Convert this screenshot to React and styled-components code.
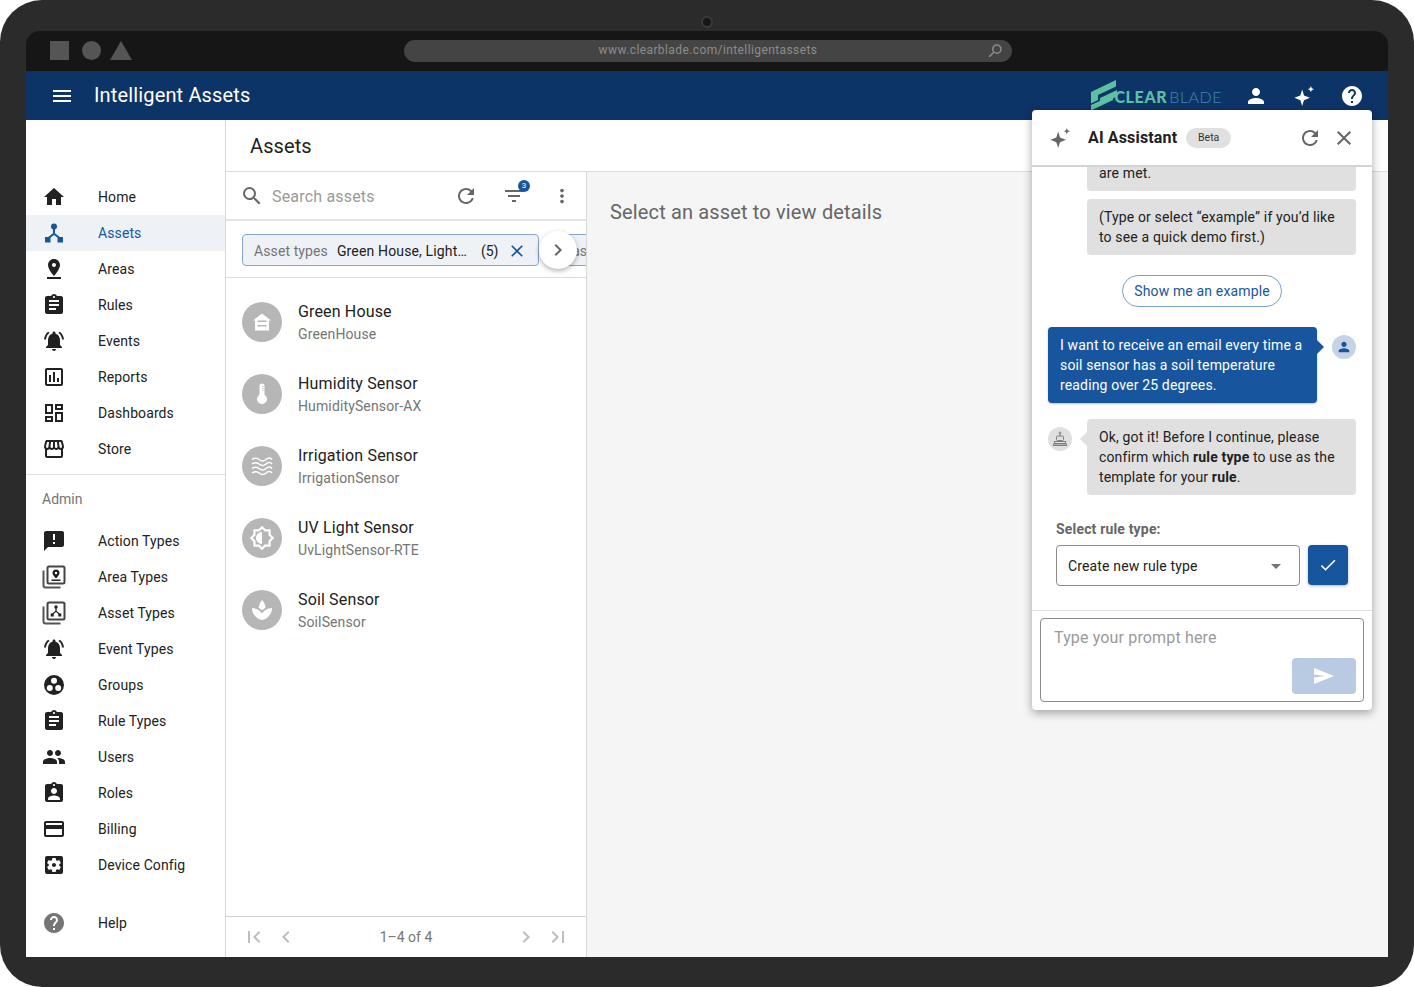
import React from "react";
import styled, { createGlobalStyle } from "styled-components";
import {
  MdMenu, MdPerson, MdHelp, MdRefresh, MdClose, MdHome, MdPinDrop, MdAssignment, MdNotificationsActive,
  MdOutlineInsertChart, MdOutlineDashboard, MdOutlineStorefront, MdAnnouncement, MdPeople,
  MdAssignmentInd, MdOutlineCreditCard, MdSettingsApplications, MdSearch, MdFilterList, MdMoreVert,
  MdChevronRight, MdChevronLeft, MdFirstPage, MdLastPage, MdArrowDropDown, MdCheck, MdOutlineBrightness6, MdSpa,
} from "react-icons/md";

const Global = createGlobalStyle`
  html, body { margin: 0; padding: 0; background: #fff; }
  body { font-family: Roboto, "Liberation Sans", sans-serif; color: #212121; }
  * { box-sizing: border-box; }
`;

const Frame = styled.div`
  width: 1414px; height: 987px; background: #2b2b2b; border-radius: 42px;
  padding: 0 26px 30px; display: flex; flex-direction: column; overflow: hidden;
`;
const Bezel = styled.div`height: 31px; flex: none; display: flex; align-items: center; justify-content: center; padding-top: 13px;`;
const Camera = styled.span`width: 12px; height: 12px; border-radius: 50%; background: #161616; border: 2px solid #3a3a3a;`;
const Screen = styled.div`flex: 1; min-height: 0; display: flex; flex-direction: column; position: relative;`;
const BrowserBar = styled.div`
  height: 40px; flex: none; background: #161616; border-radius: 14px 14px 0 0;
  display: flex; align-items: center; padding: 0 24px; position: relative;
`;
const Shapes = styled.svg`width: 84px; height: 20px; flex: none;`;
const UrlBar = styled.div`
  margin-left: 270px; width: 608px; height: 22px; border-radius: 11px; background: #444;
  display: flex; align-items: center; justify-content: center; position: relative;
  font-size: 12px; letter-spacing: 0.4px; color: #8c8c8c; padding-bottom: 2px;
`;
const UrlIcon = styled(MdSearch)`position: absolute; right: 8px; top: 2px; color: #8c8c8c; transform: scaleX(-1);`;
const AppBar = styled.header`
  height: 49px; flex: none; background: #0d3466; color: #fff; display: flex; align-items: center; padding: 0 24px 0 24px;
`;
const AppTitle = styled.div`font-size: 20px; margin-left: 20px; letter-spacing: 0.15px; flex: 1; padding-bottom: 1px;`;
const LogoWrap = styled.div`display: flex; align-items: flex-end; margin-right: 22px; height: 49px; padding-bottom: 13px; position: relative;`;
const LogoMark = styled.svg`width: 28px; height: 32px; position: absolute; left: -24px; top: 8px;`;
const LogoClear = styled.span`font-family: Lato, sans-serif; font-weight: 900; font-size: 16px; line-height: 20px; letter-spacing: 0.65px; color: #5cc0a2;`;
const LogoBlade = styled.span`font-family: Lato, sans-serif; font-weight: 300; font-size: 16px; line-height: 20px; letter-spacing: 0.5px; color: #3f86b8; margin-left: 2px;`;
const TopIcons = styled.div`display: flex; align-items: center; gap: 24px;`;
const IconSlot = styled.span`width: 24px; height: 24px; display: inline-flex; align-items: center; justify-content: center; flex: none; color: ${p => p.$c || "inherit"}; margin-left: ${p => p.$ml || 0}px;`;

const Body = styled.div`flex: 1; min-height: 0; display: flex; background: #fff;`;
const Sidebar = styled.nav`width: 200px; flex: none; border-right: 1px solid #d8d8d8; display: flex; flex-direction: column; padding-top: 51px;`;
const NavGroup = styled.div`padding: ${p => p.$top || 0}px 0 ${p => p.$bottom || 0}px; border-top: 1px solid ${p => p.$line ? "#e0e0e0" : "transparent"};`;
const NavRow = styled.div`
  height: 36px; display: flex; align-items: center; padding-left: 16px; font-size: 14px; letter-spacing: 0.1px;
  background: ${p => p.$active ? "#eef1f5" : "transparent"}; color: ${p => p.$active ? "#17569f" : "#212121"};
`;
const NavLabel = styled.span`margin-left: 32px;`;
const AdminTitle = styled.div`font-size: 14px; color: #757575; padding: 16px 0 0 16px; height: 48px; line-height: 16px;`;
const Spacer = styled.div`height: 22px;`;

const Main = styled.div`flex: 1; min-width: 0; display: flex; flex-direction: column;`;
const PageHead = styled.div`height: 52px; flex: none; border-bottom: 1px solid #dcdcdc; padding: 0 24px; display: flex; align-items: center; font-size: 20px; letter-spacing: 0.1px;`;
const Columns = styled.div`flex: 1; min-height: 0; display: flex;`;
const ListPane = styled.section`width: 361px; flex: none; border-right: 1px solid #d8d8d8; display: flex; flex-direction: column;`;
const SearchRow = styled.div`height: 49px; flex: none; border-bottom: 2px solid #e4e4e4; display: flex; align-items: center; padding: 0 12px 0 14px; color: #666;`;
const Placeholder = styled.span`font-size: 16px; letter-spacing: 0.18px; color: #9a9a9a; margin-left: 8px; flex: 1; padding-top: 2px;`;
const ToolIcon = styled.span`width: 24px; height: 24px; display: inline-flex; align-items: center; justify-content: center; position: relative; margin-left: ${p => p.$ml || 0}px; color: #666;`;
const Badge = styled.span`
  position: absolute; top: -4px; right: -4px; width: 12px; height: 12px; border-radius: 50%;
  background: #17569f; color: #fff; font-size: 8px; line-height: 12px; text-align: center;
`;
const ChipRow = styled.div`height: 57px; flex: none; border-bottom: 1px solid #d8dbe0; display: flex; align-items: center; gap: 8px; padding: 2px 0 0 16px; overflow: hidden; position: relative;`;
const Chip = styled.div`
  flex: none; height: 32px; border: 1px solid #86a8d0; border-radius: 4px; background: #eef1f5; display: flex; align-items: center; padding: 1px 11px 0 11px; font-size: 14px;
`;
const ChipLabel = styled.span`color: #757575; margin-right: 9px; letter-spacing: 0.1px;`;
const ChipValue = styled.span`color: #212121; letter-spacing: 0.15px; width: 130px; white-space: nowrap;`;
const ChipCount = styled.span`margin: 0 9px 0 14px; color: #212121;`;
const ScrollBtn = styled.div`
  position: absolute; left: 313px; top: 10px; width: 38px; height: 38px; border-radius: 50%; background: #fff;
  box-shadow: 0 2px 5px rgba(0,0,0,.3); display: flex; align-items: center; justify-content: center; color: #666;
`;
const AssetList = styled.div`flex: 1; padding-top: 8px;`;
const AssetRow = styled.div`height: 72px; display: flex; align-items: center; padding-left: 16px; gap: 16px;`;
const AssetAvatar = styled.div`width: 40px; height: 40px; border-radius: 50%; background: #b6b6b6; color: #fff; display: flex; align-items: center; justify-content: center; flex: none;`;
const AssetText = styled.div`display: flex; flex-direction: column; gap: 2px; padding-top: 1px;`;
const AssetName = styled.div`font-size: 16px; line-height: 20px; letter-spacing: 0.15px; color: #212121;`;
const AssetType = styled.div`font-size: 14px; line-height: 20px; letter-spacing: 0.13px; color: #757575;`;
const Pager = styled.div`height: 41px; flex: none; border-top: 1px solid #cfcfcf; display: flex; align-items: center; padding: 0 16px; color: #bdbdbd;`;
const PagerText = styled.span`flex: 1; text-align: center; font-size: 14px; color: #757575;`;
const PagerGap = styled.span`width: ${p => p.$w}px;`;
const DetailPane = styled.section`flex: 1; background: #f5f5f5; padding: 28px 23px; font-size: 20px; line-height: 24px; letter-spacing: 0.15px; color: #666;`;

const Chat = styled.aside`
  position: absolute; top: 79px; right: 16px; width: 340px; height: 600px; background: #fff; border-radius: 4px;
  box-shadow: 0 3px 10px rgba(0,0,0,.35); display: flex; flex-direction: column; overflow: hidden;
`;
const ChatHead = styled.div`height: 57px; flex: none; border-bottom: 2px solid #d4d4d4; display: flex; align-items: center; padding: 0 16px 0 16px; color: #666;`;
const ChatTitle = styled.div`font-size: 16px; font-weight: 700; color: #212121; margin-left: 16px; letter-spacing: 0.15px;`;
const BetaChip = styled.span`margin-left: 9px; width: 45px; height: 20px; border-radius: 10px; background: #e0e0e0; font-size: 10.5px; color: #333; display: flex; align-items: center; justify-content: center;`;
const Grow = styled.div`flex: 1;`;
const Messages = styled.div`flex: 1; min-height: 0; overflow: hidden; display: flex; flex-direction: column; justify-content: flex-end; padding: 0 16px 24px;`;
const Bubble = styled.div`
  width: 269px; flex: none; padding: 8px 12px; border-radius: 4px; font-size: 14px; line-height: 20px; letter-spacing: 0.15px;
  position: relative; background: ${p => p.$user ? "#17569f" : "#e0e0e0"}; color: ${p => p.$user ? "#fff" : "#212121"};
  ${p => p.$user ? "box-shadow: 0 1px 2px rgba(0,0,0,.25);" : ""}
  ${p => p.$tail === "right" ? `&::after{content:"";position:absolute;right:-7px;top:13px;border:7px solid transparent;border-right:0;border-left-color:#17569f;}` : ""}
  ${p => p.$tail === "left" ? `&::after{content:"";position:absolute;left:-7px;top:13px;border:7px solid transparent;border-left:0;border-right-color:#e0e0e0;}` : ""}
  b { font-weight: 700; }
`;
const BotOnly = styled.div`display: flex; justify-content: flex-end; margin-top: ${p => p.$mt || 0}px; flex: none;`;
const MsgRow = styled.div`display: flex; justify-content: space-between; align-items: flex-start; margin-top: ${p => p.$mt}px; flex: none;`;
const Avatar = styled.div`width: 24px; height: 24px; border-radius: 50%; margin-top: 8px; display: flex; align-items: center; justify-content: center; flex: none; background: ${p => p.$user ? "#c6d3e6" : "#e0e0e0"}; color: ${p => p.$user ? "#17569f" : "#777"};`;
const ExampleWrap = styled.div`display: flex; justify-content: center; margin-top: 20px; flex: none;`;
const ExampleBtn = styled.div`width: 160px; height: 32px; border: 1px solid #7ba0cc; border-radius: 16px; display: flex; align-items: center; justify-content: center; font-size: 14px; letter-spacing: 0.15px; color: #17569f;`;
const RuleLabel = styled.div`margin: 24px 0 6px 8px; font-size: 14px; line-height: 20px; font-weight: 700; letter-spacing: 0.17px; color: #666; flex: none;`;
const RuleRow = styled.div`display: flex; gap: 8px; padding: 0 8px; flex: none;`;
const SelectBox = styled.div`width: 244px; height: 41px; border: 1px solid #8c8c8c; border-radius: 4px; padding: 0 11px 0 11px; display: flex; align-items: center; justify-content: space-between; font-size: 14px; letter-spacing: 0.15px; color: #212121;`;
const DropIcon = styled(MdArrowDropDown)`color: #757575;`;
const ConfirmBtn = styled.div`width: 40px; height: 40px; border-radius: 4px; background: #17569f; color: #fff; display: flex; align-items: center; justify-content: center; box-shadow: 0 1px 3px rgba(0,0,0,.3);`;
const ChatFoot = styled.div`height: 100px; flex: none; border-top: 1px solid #e0e0e0; padding: 7px 8px 8px;`;
const PromptBox = styled.div`height: 84px; border: 1px solid #8c8c8c; border-radius: 4px; padding: 9px 13px; position: relative; font-size: 16px; line-height: 20px; letter-spacing: 0.15px; color: #9a9a9a;`;
const SendBtn = styled.div`position: absolute; right: 7px; bottom: 7px; width: 64px; height: 36px; border-radius: 4px; background: #b9cbe3; display: flex; align-items: center; justify-content: center;`;
const FlippedSun = styled(MdOutlineBrightness6)`transform: scaleX(-1);`;

const Sparkle = ({ size = 24, color = "currentColor" }) => (
  <svg width={size} height={size} viewBox="0 0 24 24" fill={color}>
    <path d="M10 5l2 6.500 6.500 2.500-6.500 2.500L10 23l-2-6.500L1.500 14 8 11.500z" />
    <path d="M19.500 1l1 2.500 2.500 1-2.500 1-1 2.500-1-2.500-2.500-1 2.500-1z" />
  </svg>
);
const HubIcon = ({ size = 24 }) => (
  <svg width={size} height={size} viewBox="0 0 24 24" fill="currentColor">
    <circle cx="12" cy="5.500" r="3" />
    <rect x="11" y="7" width="2" height="6" />
    <path d="M12 11.500l6.500 5-1.200 1.600L12 14l-5.300 4.100-1.200-1.600z" />
    <rect x="3" y="16" width="5.500" height="5.500" />
    <rect x="15.500" y="16" width="5.500" height="5.500" />
  </svg>
);
const StackIcon = ({ kind }) => (
  <svg width="24" height="24" viewBox="0 0 24 24" fill="none">
    <path d="M1.500 5.500v15a2 2 0 0 0 2 2h15" stroke="#555" strokeWidth="2" />
    <rect x="5.500" y="1.500" width="17" height="17" rx="1.500" stroke="#444" strokeWidth="2" />
    {kind === "pin" ? (
      <g fill="#212121">
        <path d="M14 4.500a3.500 3.500 0 0 1 3.500 3.500c0 2.300-3.500 5.500-3.500 5.500S10.500 10.300 10.500 8A3.500 3.500 0 0 1 14 4.500z" />
        <circle cx="14" cy="8" r="1.200" fill="#fff" />
        <rect x="9.500" y="14.500" width="9" height="1.500" />
      </g>
    ) : (
      <g fill="#212121">
        <circle cx="14" cy="6" r="1.700" />
        <rect x="13.400" y="7" width="1.200" height="3.500" />
        <path d="M14 9.500l3.700 3-.7.900L14 11l-3 2.400-.7-.9z" />
        <rect x="8.700" y="12.500" width="3" height="3" />
        <rect x="16.300" y="12.500" width="3" height="3" />
      </g>
    )}
  </svg>
);
const GroupsIcon = () => (
  <svg width="24" height="24" viewBox="0 0 24 24">
    <circle cx="12" cy="12" r="10" fill="#212121" />
    <circle cx="12" cy="7.800" r="3" fill="#fff" />
    <circle cx="7.800" cy="15" r="3" fill="#fff" />
    <circle cx="16.200" cy="15" r="3" fill="#fff" />
  </svg>
);
const GreenHouse = () => (
  <svg width="20" height="20" viewBox="0 0 20 20">
    <path d="M10 1.500L1 8.500h2V18.500h14V8.500h2z" fill="#fff" />
    <path d="M5.500 8.500h9v1.500h-9zM5.500 13h9v1.500h-9z" fill="#b6b6b6" />
  </svg>
);
const Thermo = () => (
  <svg width="22" height="24" viewBox="0 0 22 24" fill="#fff">
    <path d="M8.500 4a2.500 2.500 0 0 1 5 0v8.800a5 5 0 1 1-5 0z" />
    <path d="M11.500 4h1v1h-1zm0 2h1v1h-1zm0 2h1v1h-1z" fill="#b6b6b6" />
  </svg>
);
const Waves = () => (
  <svg width="24" height="24" viewBox="0 0 24 24" fill="none" stroke="#fff" strokeWidth="1.500">
    <path d="M2 5.500c3-2 4.500-2 7 0s5 2 7 0 4.500-2 6 0" />
    <path d="M2 10c3-2 4.500-2 7 0s5 2 7 0 4.500-2 6 0" />
    <path d="M2 14.500c3-2 4.500-2 7 0s5 2 7 0 4.500-2 6 0" />
    <path d="M2 19c3-2 4.500-2 7 0s5 2 7 0 4.500-2 6 0" />
  </svg>
);
const Bot = () => (
  <svg width="16" height="16" viewBox="0 0 16 16" fill="none" stroke="#808080" strokeWidth="1">
    <circle cx="8" cy="2" r="1" />
    <path d="M8 3v2" />
    <rect x="4.500" y="5" width="7" height="4.500" rx="1" />
    <path d="M6.300 7h.1M9.600 7h.1" strokeWidth="1.300" />
    <rect x="2.500" y="10.500" width="11" height="2" />
    <rect x="1.500" y="13" width="13" height="1.500" />
  </svg>
);
const SendGlyph = () => (
  <svg width="22" height="18" viewBox="0 0 22 18" fill="#fff">
    <path d="M1 1l20 8-20 8 0-6.500L12 9 1 7.500z" />
  </svg>
);

const primary = [
  ["Home", <MdHome size={26} />],
  ["Assets", <HubIcon />, true],
  ["Areas", <MdPinDrop size={24} />],
  ["Rules", <MdAssignment size={24} />],
  ["Events", <MdNotificationsActive size={24} />],
  ["Reports", <MdOutlineInsertChart size={24} />],
  ["Dashboards", <MdOutlineDashboard size={24} />],
  ["Store", <MdOutlineStorefront size={26} />],
];
const admin = [
  ["Action Types", <MdAnnouncement size={24} />],
  ["Area Types", <StackIcon kind="pin" />],
  ["Asset Types", <StackIcon kind="hub" />],
  ["Event Types", <MdNotificationsActive size={24} />],
  ["Groups", <GroupsIcon />],
  ["Rule Types", <MdAssignment size={24} />],
  ["Users", <MdPeople size={28} />],
  ["Roles", <MdAssignmentInd size={24} />],
  ["Billing", <MdOutlineCreditCard size={24} />],
  ["Device Config", <MdSettingsApplications size={24} />],
];
const assets = [
  ["Green House", "GreenHouse", <GreenHouse />],
  ["Humidity Sensor", "HumiditySensor-AX", <Thermo />],
  ["Irrigation Sensor", "IrrigationSensor", <Waves />],
  ["UV Light Sensor", "UvLightSensor-RTE", <FlippedSun size={26} />],
  ["Soil Sensor", "SoilSensor", <MdSpa size={24} />],
];

const Nav = ({ label, icon, active, color }) => (
  <NavRow $active={active}>
    <IconSlot $c={color}>{icon}</IconSlot>
    <NavLabel>{label}</NavLabel>
  </NavRow>
);

export default function App() {
  return (
    <Frame>
      <Global />
      <Bezel><Camera /></Bezel>
      <Screen>
        <BrowserBar>
          <Shapes viewBox="0 0 84 20" fill="#555">
            <rect x="0" y="0" width="19" height="19" />
            <circle cx="41.500" cy="9.500" r="9.500" />
            <path d="M60 19L71 0l11 19z" />
          </Shapes>
          <UrlBar>
            www.clearblade.com/intelligentassets
            <UrlIcon size={18} />
          </UrlBar>
        </BrowserBar>
        <AppBar>
          <MdMenu size={24} />
          <AppTitle>Intelligent Assets</AppTitle>
          <LogoWrap>
            <LogoMark viewBox="0 0 28 32" fill="#5cc0a2">
              <path d="M1 13L26 1v6.500L8 16v5L1 24.500z" />
              <path d="M10 19L27 11v6.500L7 27v-3l3-1.500z" />
              <path d="M1 26l22-10v5L1 31.500z" />
            </LogoMark>
            <LogoClear>CLEAR</LogoClear>
            <LogoBlade>BLADE</LogoBlade>
          </LogoWrap>
          <TopIcons>
            <MdPerson size={24} />
            <IconSlot><Sparkle size={22} color="#fff" /></IconSlot>
            <MdHelp size={24} />
          </TopIcons>
        </AppBar>
        <Body>
          <Sidebar>
            <NavGroup $top={7} $bottom={7}>
              {primary.map(([l, i, a]) => <Nav key={l} label={l} icon={i} active={a} color={a ? "#17569f" : "#212121"} />)}
            </NavGroup>
            <NavGroup $line>
              <AdminTitle>Admin</AdminTitle>
              {admin.map(([l, i]) => <Nav key={l} label={l} icon={i} color="#212121" />)}
            </NavGroup>
            <Spacer />
            <Nav label="Help" icon={<MdHelp size={26} />} color="#757575" />
          </Sidebar>
          <Main>
            <PageHead>Assets</PageHead>
            <Columns>
              <ListPane>
                <SearchRow>
                  <MdSearch size={24} />
                  <Placeholder>Search assets</Placeholder>
                  <ToolIcon><MdRefresh size={24} /></ToolIcon>
                  <ToolIcon $ml={24}><MdFilterList size={24} /><Badge>3</Badge></ToolIcon>
                  <ToolIcon $ml={24}><MdMoreVert size={22} /></ToolIcon>
                </SearchRow>
                <ChipRow>
                  <Chip>
                    <ChipLabel>Asset types</ChipLabel>
                    <ChipValue>Green House, Light…</ChipValue>
                    <ChipCount>(5)</ChipCount>
                    <MdClose size={20} color="#17569f" />
                  </Chip>
                  <Chip><ChipLabel>Class types</ChipLabel></Chip>
                  <ScrollBtn><MdChevronRight size={24} /></ScrollBtn>
                </ChipRow>
                <AssetList>
                  {assets.map(([n, t, i]) => (
                    <AssetRow key={n}>
                      <AssetAvatar>{i}</AssetAvatar>
                      <AssetText><AssetName>{n}</AssetName><AssetType>{t}</AssetType></AssetText>
                    </AssetRow>
                  ))}
                </AssetList>
                <Pager>
                  <MdFirstPage size={24} />
                  <PagerGap $w={8} />
                  <MdChevronLeft size={24} />
                  <PagerText>1–4 of 4</PagerText>
                  <MdChevronRight size={24} />
                  <PagerGap $w={8} />
                  <MdLastPage size={24} />
                </Pager>
              </ListPane>
              <DetailPane>Select an asset to view details</DetailPane>
            </Columns>
          </Main>
        </Body>
        <Chat>
          <ChatHead>
            <IconSlot $c="#666"><Sparkle size={22} /></IconSlot>
            <ChatTitle>AI Assistant</ChatTitle>
            <BetaChip>Beta</BetaChip>
            <Grow />
            <MdRefresh size={24} />
            <IconSlot $ml={10}><MdClose size={24} /></IconSlot>
          </ChatHead>
          <Messages>
            <BotOnly><Bubble>are met.</Bubble></BotOnly>
            <BotOnly $mt={8}><Bubble>(Type or select “example” if you’d like to see a quick demo first.)</Bubble></BotOnly>
            <ExampleWrap><ExampleBtn>Show me an example</ExampleBtn></ExampleWrap>
            <MsgRow $mt={20}>
              <Bubble $user $tail="right">I want to receive an email every time a soil sensor has a soil temperature reading over 25 degrees.</Bubble>
              <Avatar $user><MdPerson size={16} /></Avatar>
            </MsgRow>
            <MsgRow $mt={16}>
              <Avatar><Bot /></Avatar>
              <Bubble $tail="left">Ok, got it! Before I continue, please confirm which <b>rule type</b> to use as the template for your <b>rule</b>.</Bubble>
            </MsgRow>
            <RuleLabel>Select rule type:</RuleLabel>
            <RuleRow>
              <SelectBox>Create new rule type<DropIcon size={24} /></SelectBox>
              <ConfirmBtn><MdCheck size={20} /></ConfirmBtn>
            </RuleRow>
          </Messages>
          <ChatFoot>
            <PromptBox>
              Type your prompt here
              <SendBtn><SendGlyph /></SendBtn>
            </PromptBox>
          </ChatFoot>
        </Chat>
      </Screen>
    </Frame>
  );
}
